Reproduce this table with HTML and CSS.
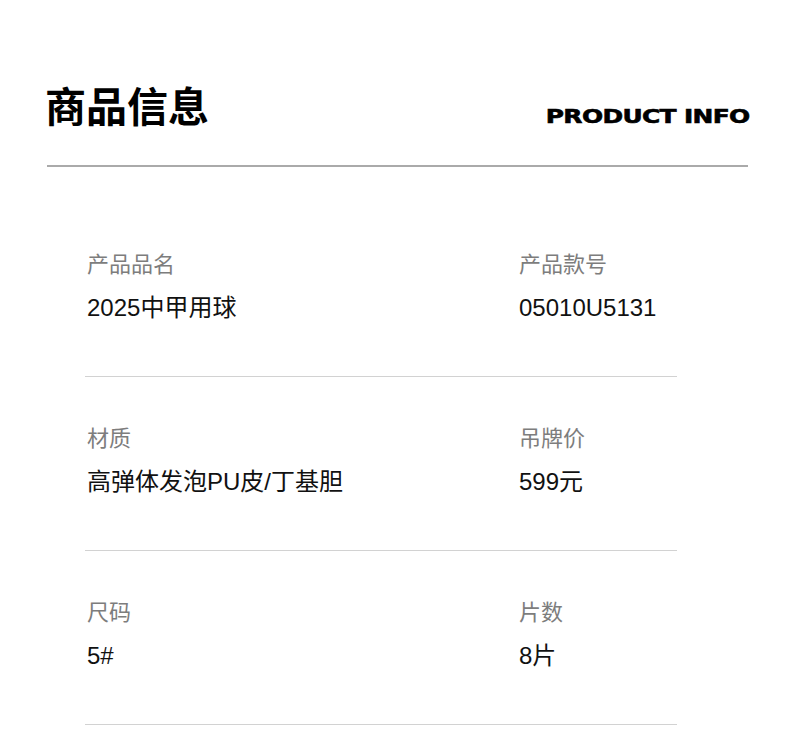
FILE: index.html
```html
<!DOCTYPE html>
<html lang="zh-CN">
<head>
  <meta charset="UTF-8">
  <meta name="viewport" content="width=device-width, initial-scale=1.0">
  <title>商品信息</title>
  <link rel="stylesheet" href="styles.css">
</head>
<body>
  <header class="info-head">
    <h1 class="info-title">商品信息</h1>
    <div class="info-sub"><span>PRODUCT INFO</span></div>
  </header>

  <main class="specs">
    <div class="spec-row">
      <div class="spec">
        <div class="spec-label">产品品名</div>
        <div class="spec-value">2025中甲用球</div>
      </div>
      <div class="spec">
        <div class="spec-label">产品款号</div>
        <div class="spec-value">05010U5131</div>
      </div>
    </div>

    <div class="spec-row">
      <div class="spec">
        <div class="spec-label">材质</div>
        <div class="spec-value">高弹体发泡PU皮/丁基胆</div>
      </div>
      <div class="spec">
        <div class="spec-label">吊牌价</div>
        <div class="spec-value">599元</div>
      </div>
    </div>

    <div class="spec-row">
      <div class="spec">
        <div class="spec-label">尺码</div>
        <div class="spec-value">5#</div>
      </div>
      <div class="spec">
        <div class="spec-label">片数</div>
        <div class="spec-value">8片</div>
      </div>
    </div>
  </main>
</body>
</html>
```

FILE: styles.css
```css
body {
  margin: 0;
  font-family: "Liberation Sans", "Noto Sans CJK SC", sans-serif;
  color: #111;
  background: #fff;
}
.info-head {
  display: flex;
  justify-content: space-between;
  align-items: flex-end;
  margin: 0 42px 0 47px;
  padding: 84px 0 40px;
  border-bottom: 2px solid #aaa;
}
.info-title {
  margin: 0 0 0 -2px;
  font-family: "Noto Sans CJK SC", sans-serif;
  font-size: 41px;
  font-weight: 700;
  line-height: 41px;
  color: #000;
}
.info-sub {
  margin: 0 -2px -2px 0;
  font-family: "DejaVu Sans", sans-serif;
  font-size: 19px;
  font-weight: 700;
  line-height: 22px;
  letter-spacing: -0.5px;
  color: #000;
}
.info-sub span {
  display: inline-block;
  transform: scaleX(1.31);
  transform-origin: right center;
  -webkit-text-stroke: 0.6px #000;
}
.specs {
  margin: 0 113px 0 85px;
  padding-top: 36px;
}
.spec-row {
  display: grid;
  grid-template-columns: 432px 1fr;
  padding: 44px 0 52px;
  border-bottom: 1px solid #d2d2d2;
}
.spec {
  padding-left: 2px;
}
.spec-label {
  font-family: "Noto Sans CJK SC", sans-serif;
  font-size: 22px;
  line-height: 30px;
  color: #7d7d7d;
}
.spec-value {
  margin-top: 15px;
  font-size: 24px;
  line-height: 32px;
  color: #111;
}
```
